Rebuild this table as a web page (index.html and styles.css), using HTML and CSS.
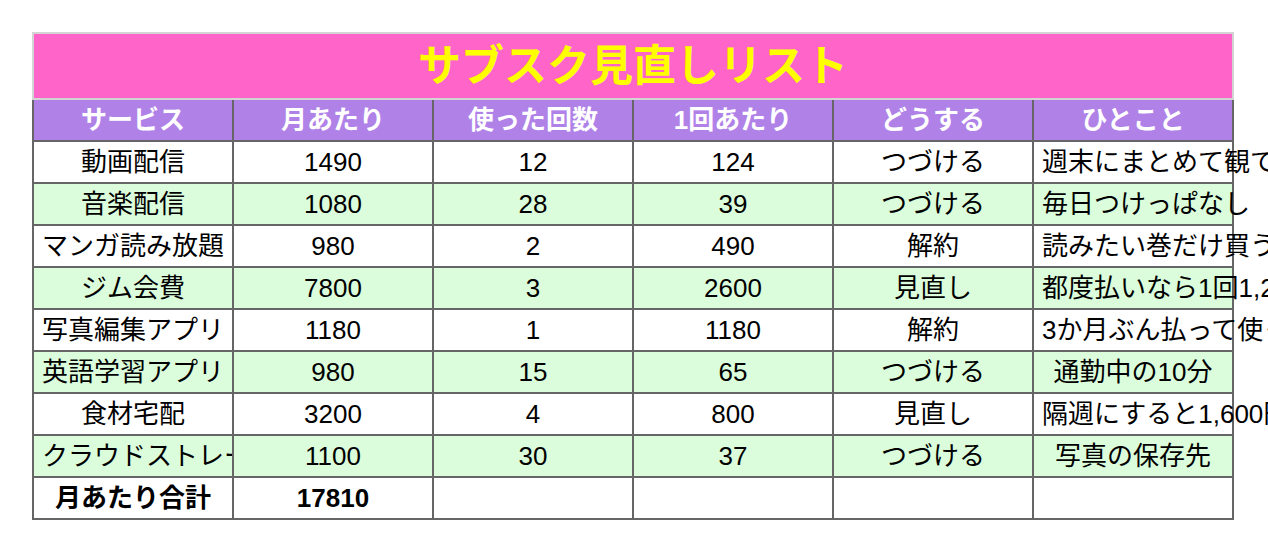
FILE: index.html
```html
<!DOCTYPE html>
<html lang="ja">
<head>
<meta charset="utf-8">
<title>サブスク見直しリスト</title>
<link rel="stylesheet" href="styles.css">
</head>
<body>
<div class="sheet">
<table class="grid">
  <colgroup>
    <col class="c"><col class="c"><col class="c"><col class="c"><col class="c"><col class="c">
  </colgroup>
  <thead>
    <tr class="title-row"><th colspan="6" class="title">サブスク見直しリスト</th></tr>
    <tr class="head-row">
      <th>サービス</th><th>月あたり</th><th>使った回数</th><th>1回あたり</th><th>どうする</th><th>ひとこと</th>
    </tr>
  </thead>
  <tbody>
    <tr><td>動画配信</td><td>1490</td><td>12</td><td>124</td><td>つづける</td><td class="spill">週末にまとめて観てる</td></tr>
    <tr class="alt"><td>音楽配信</td><td>1080</td><td>28</td><td>39</td><td>つづける</td><td class="spill">毎日つけっぱなし</td></tr>
    <tr><td>マンガ読み放題</td><td>980</td><td>2</td><td>490</td><td>解約</td><td class="spill">読みたい巻だけ買う</td></tr>
    <tr class="alt"><td>ジム会費</td><td>7800</td><td>3</td><td>2600</td><td>見直し</td><td class="spill">都度払いなら1回1,200円</td></tr>
    <tr><td>写真編集アプリ</td><td>1180</td><td>1</td><td>1180</td><td>解約</td><td class="spill">3か月ぶん払って使ったのは1回</td></tr>
    <tr class="alt"><td>英語学習アプリ</td><td>980</td><td>15</td><td>65</td><td>つづける</td><td>通勤中の10分</td></tr>
    <tr><td>食材宅配</td><td>3200</td><td>4</td><td>800</td><td>見直し</td><td class="spill">隔週にすると1,600円</td></tr>
    <tr class="alt"><td class="clip">クラウドストレージ</td><td>1100</td><td>30</td><td>37</td><td>つづける</td><td>写真の保存先</td></tr>
    <tr class="total"><td>月あたり合計</td><td>17810</td><td></td><td></td><td></td><td></td></tr>
  </tbody>
</table>
</div>
</body>
</html>
```

FILE: styles.css
```css
html, body {
  margin: 0;
  padding: 0;
  background: #ffffff;
}
.sheet {
  width: 100%;
  overflow: hidden;
  padding: 32px 0 0 32px;
  box-sizing: border-box;
  height: 552px;
}
.grid {
  border-collapse: collapse;
  table-layout: fixed;
  width: 1202px;
  font-family: "Liberation Sans", "Noto Sans CJK JP", sans-serif;
  font-size: 26px;
  color: #000;
}
.grid col.c {
  width: 200px;
}
.grid th, .grid td {
  border: 2px solid #666666;
  padding: 0 8px;
  height: 40px;
  text-align: center;
  vertical-align: middle;
  white-space: nowrap;
  line-height: 38px;
}
.grid td {
  overflow: hidden;
}
.title-row .title {
  height: 64px;
  line-height: 60px;
  background: #ff64c8;
  color: #ffff00;
  font-size: 43px;
  font-weight: bold;
  border: 2px solid #d4d4d4;
}
.head-row th {
  background: #b082e8;
  color: #ffffff;
  font-weight: bold;
  font-size: 26px;
  line-height: 36px;
  border-top-color: #d4d4d4;
}
.grid tr.alt td {
  background: #dbfddb;
}
.grid td.clip {
  text-align: left;
}
.grid td.spill {
  text-align: left;
  overflow: visible;
}
.grid tr.total td {
  font-weight: bold;
}
```
